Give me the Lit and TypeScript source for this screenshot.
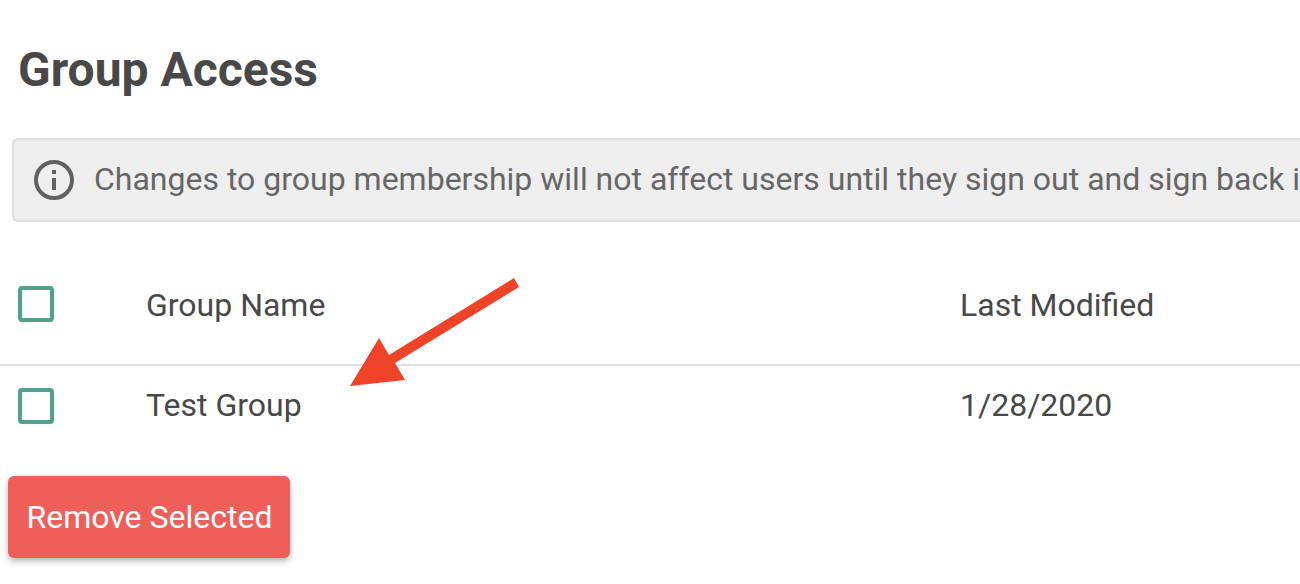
import { LitElement, html, css } from "lit";
import { customElement } from "lit/decorators.js";

@customElement("app-root")
export class AppRoot extends LitElement {
  static styles = css`
    :host {
      display: block;
      position: relative;
      width: 1300px;
      height: 584px;
      overflow: hidden;
      background: #fff;
      font-family: Roboto, "Liberation Sans", sans-serif;
      color: #484848;
    }
    h1 {
      margin: 0;
      padding: 43px 0 0 18px;
      height: 138px;
      box-sizing: border-box;
      font-size: 48px;
      line-height: 54px;
      font-weight: 700;
      white-space: nowrap;
    }
    .notice {
      display: flex;
      align-items: center;
      gap: 18px;
      box-sizing: border-box;
      width: 1500px;
      height: 84px;
      margin-left: 12px;
      padding-left: 18px;
      background: #eeeeee;
      border: 2px solid #dedede;
      border-radius: 6px;
      font-size: 32px;
      color: #666666;
      white-space: nowrap;
    }
    .notice svg {
      flex: none;
      width: 44px;
      height: 44px;
    }
    .notice span {
      padding-bottom: 2px;
    }
    .row {
      display: grid;
      grid-template-columns: 128px 814px 1fr;
      align-items: center;
      box-sizing: border-box;
      padding-left: 18px;
      font-size: 32px;
    }
    .head {
      height: 144px;
      padding-top: 22px;
      border-bottom: 2px solid #e0e0e0;
    }
    .head .cell {
      padding-top: 2px;
    }
    .body {
      height: 80px;
    }
    .body .cell {
      padding-bottom: 2px;
    }
    .check {
      box-sizing: border-box;
      width: 36px;
      height: 36px;
      border: 4px solid #4ea38a;
      border-radius: 4px;
    }
    button {
      display: block;
      box-sizing: border-box;
      width: 282px;
      height: 82px;
      margin: 30px 0 0 8px;
      border: 0;
      border-radius: 6px;
      background: #ef5f5a;
      color: #fff;
      font-family: inherit;
      font-size: 32px;
      padding: 0 0 0 1px;
      box-shadow: 0 3px 6px rgba(0, 0, 0, 0.3);
    }
    .arrow {
      position: absolute;
      left: 0;
      top: 0;
      width: 1300px;
      height: 584px;
      pointer-events: none;
    }
  `;

  render() {
    return html`
      <h1>Group Access</h1>
      <div class="notice">
        <svg viewBox="0 0 44 44" fill="none">
          <circle cx="22" cy="22" r="18" stroke="#616161" stroke-width="4"></circle>
          <rect x="20" y="20" width="4" height="12" fill="#616161"></rect>
          <rect x="20" y="12" width="4" height="4" fill="#616161"></rect>
        </svg>
        <span>Changes to group membership will not affect users until they sign out and sign back in.</span>
      </div>
      <div class="row head">
        <div class="check"></div>
        <div class="cell">Group Name</div>
        <div class="cell">Last Modified</div>
      </div>
      <div class="row body">
        <div class="check"></div>
        <div class="cell">Test Group</div>
        <div class="cell">1/28/2020</div>
      </div>
      <button>Remove Selected</button>
      <svg class="arrow" viewBox="0 0 1300 584">
        <polygon
          points="514,278 519,287 395,363 405,380 350,386 379,338 389,355"
          fill="#ee4327"
        ></polygon>
      </svg>
    `;
  }
}
